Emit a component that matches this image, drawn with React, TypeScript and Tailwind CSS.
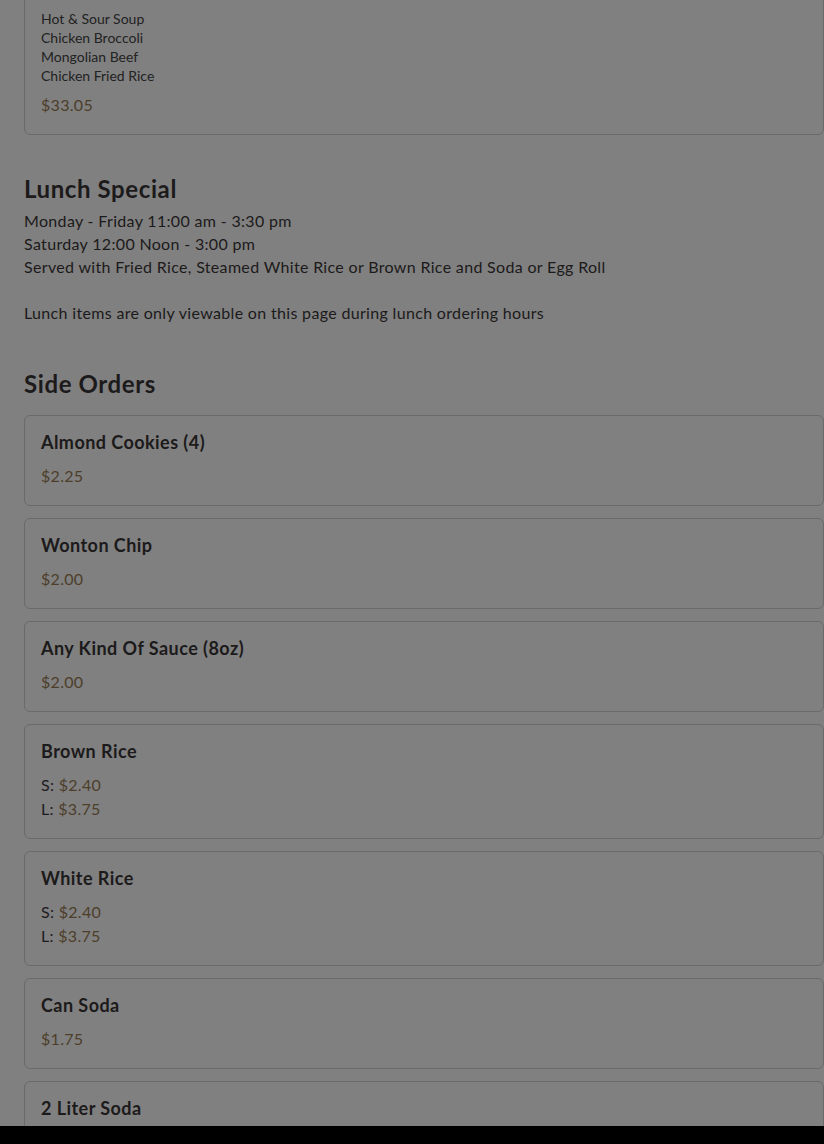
const sides = [
  { name: "Almond Cookies (4)", prices: [{ label: "", price: "$2.25" }] },
  { name: "Wonton Chip", prices: [{ label: "", price: "$2.00" }] },
  { name: "Any Kind Of Sauce (8oz)", prices: [{ label: "", price: "$2.00" }] },
  {
    name: "Brown Rice",
    prices: [
      { label: "S:", price: "$2.40" },
      { label: "L:", price: "$3.75" },
    ],
  },
  {
    name: "White Rice",
    prices: [
      { label: "S:", price: "$2.40" },
      { label: "L:", price: "$3.75" },
    ],
  },
  { name: "Can Soda", prices: [{ label: "", price: "$1.75" }] },
  { name: "2 Liter Soda", prices: [] },
];

const ItemCard = ({ item }: { item: (typeof sides)[number] }) => {
  return (
    <div className="w-[800px] min-h-[91px] shrink-0 rounded-md border border-[#6a6a6a] px-4 pt-[12px] pb-[17px]">
      <h3 className="text-[18px] leading-[28px] font-bold tracking-[0.45px] text-[#1c1a1a]">{item.name}</h3>
      <div className="mt-[8px]">
        {item.prices.map((p, i) => (
          <div key={i} className="text-[16px] leading-[24px] tracking-[0.3px]">
            {p.label && <span className="text-[#1e1b1f]">{p.label} </span>}
            <span className="text-[#4d3e2a]">{p.price}</span>
          </div>
        ))}
      </div>
    </div>
  );
};

export default function App() {
  return (
    <div className="h-[1144px] w-[824px] overflow-hidden flex flex-col bg-[#808080] font-['Lato',sans-serif] text-[#1c1a1a]">
      <div className="flex-1 overflow-hidden pl-6">
        <div className="-mt-[40px] w-[800px] rounded-md border border-[#6a6a6a] px-4 pt-[40px] pb-[17px]">
          <ul className="text-[14px] leading-[19px] text-[#222]">
            <li className="mt-[8px]">Hot &amp; Sour Soup</li>
            <li>Chicken Broccoli</li>
            <li>Mongolian Beef</li>
            <li>Chicken Fried Rice</li>
          </ul>
          <div className="mt-[8px] text-[16px] leading-[24px] tracking-[0.3px] text-[#4d3e2a]">$33.05</div>
        </div>

        <section className="mt-[38px]">
          <h2 className="text-[24px] leading-[32px] font-bold tracking-[0.6px]">Lunch Special</h2>
          <div className="mt-[4px] text-[16px] leading-[23px] tracking-[0.33px]">
            <p>Monday - Friday 11:00 am - 3:30 pm</p>
            <p>Saturday 12:00 Noon - 3:00 pm</p>
            <p>Served with Fried Rice, Steamed White Rice or Brown Rice and Soda or Egg Roll</p>
            <p className="mt-[23px]">Lunch items are only viewable on this page during lunch ordering hours</p>
          </div>
        </section>

        <section className="mt-[44px]">
          <h2 className="text-[24px] leading-[32px] font-bold tracking-[0.6px]">Side Orders</h2>
          <div className="mt-[15px] flex flex-col gap-[12px]">
            {sides.map((s) => (
              <ItemCard key={s.name} item={s} />
            ))}
          </div>
        </section>
      </div>
      <div className="h-[18px] shrink-0 bg-black" />
    </div>
  );
}
